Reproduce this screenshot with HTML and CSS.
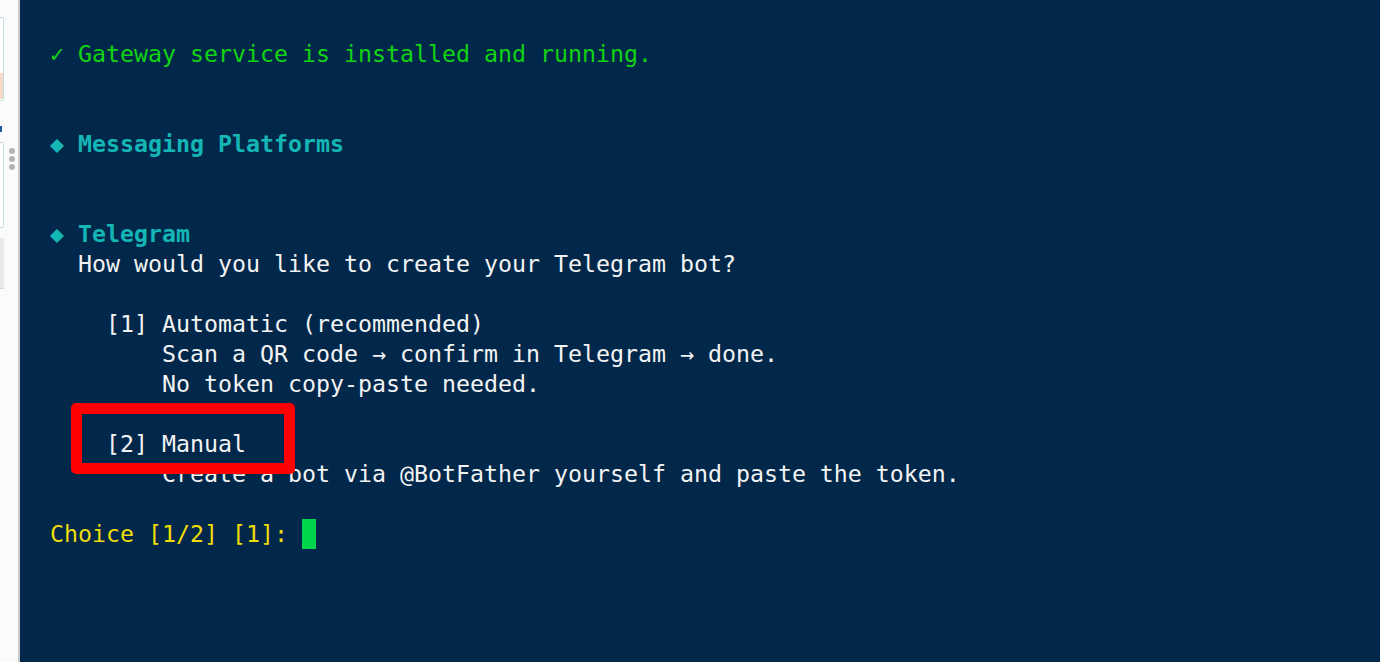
FILE: index.html
```html
<!DOCTYPE html>
<html>
<head>
<meta charset="utf-8">
<link rel="stylesheet" href="styles.css">
</head>
<body>
<div class="app">
  <aside class="side">
    <div class="side-box side-box-a"><div class="side-tab"></div></div>
    <div class="side-dot"></div>
    <div class="side-box side-box-b"></div>
    <div class="grip"><span></span><span></span><span></span></div>
    <div class="side-panel"></div>
  </aside>
  <main class="term">
    <div class="line green">✓ Gateway service is installed and running.</div>
    <div class="line"> </div>
    <div class="line"> </div>
    <div class="line cyan bold">◆ Messaging Platforms</div>
    <div class="line"> </div>
    <div class="line"> </div>
    <div class="line cyan bold">◆ Telegram</div>
    <div class="line white">  How would you like to create your Telegram bot?</div>
    <div class="line"> </div>
    <div class="line white">    [1] Automatic (recommended)</div>
    <div class="line white">        Scan a QR code → confirm in Telegram → done.</div>
    <div class="line white">        No token copy-paste needed.</div>
    <div class="line"> </div>
    <div class="line white">    [2] Manual</div>
    <div class="line white">        Create a bot via @BotFather yourself and paste the token.</div>
    <div class="line"> </div>
    <div class="line yellow">Choice [1/2] [1]: <span class="cursor"></span></div>
    <div class="highlight"></div>
  </main>
</div>
</body>
</html>
```

FILE: styles.css
```css
html, body {
  margin: 0;
  padding: 0;
  width: 1380px;
  height: 662px;
  overflow: hidden;
  background: #01284a;
}
.app {
  display: flex;
  height: 662px;
}
.side {
  position: relative;
  width: 18px;
  flex: none;
  background: #fbfbfb;
  border-right: 2px solid #c9c9c9;
}
.side-box {
  margin-left: -4px;
  width: 6px;
  border: 1px solid #c7dde6;
  border-radius: 2px;
  background: #fff;
}
.side-box-a {
  margin-top: 17px;
  height: 82px;
  position: relative;
}
.side-tab {
  position: absolute;
  left: 0;
  right: 0;
  top: 55px;
  height: 26px;
  background: #f7d8c4;
}
.side-dot {
  margin-top: 25px;
  width: 2px;
  height: 6px;
  background: #1f5e9e;
}
.side-box-b {
  margin-top: 10px;
  height: 84px;
}
.grip {
  position: absolute;
  left: 9px;
  top: 148px;
  display: flex;
  flex-direction: column;
  gap: 2px;
}
.grip span {
  width: 6px;
  height: 6px;
  border-radius: 50%;
  background: #b4b4b4;
}
.side-panel {
  margin-top: 10px;
  width: 4px;
  height: 50px;
  background: #e9e9e9;
  border-bottom: 1px solid #d8d8d8;
}
.term {
  position: relative;
  flex: 1;
  padding: 39px 0 0 30px;
  font-family: "DejaVu Sans Mono", monospace;
  font-size: 23.25px;
  color: #f2f2f2;
}
.line {
  height: 30px;
  line-height: 30px;
  white-space: pre;
}
.green { color: #12d312; }
.cyan { color: #14b6b6; }
.bold { font-weight: bold; }
.white { color: #f3f3f3; }
.yellow { color: #eedc0a; }
.cursor {
  display: inline-block;
  width: 14px;
  height: 30px;
  vertical-align: top;
  background: #00d44b;
}
.highlight {
  position: absolute;
  left: 51px;
  top: 403px;
  width: 202px;
  height: 49px;
  border: 11px solid #ff0000;
  border-radius: 5px;
}
```
